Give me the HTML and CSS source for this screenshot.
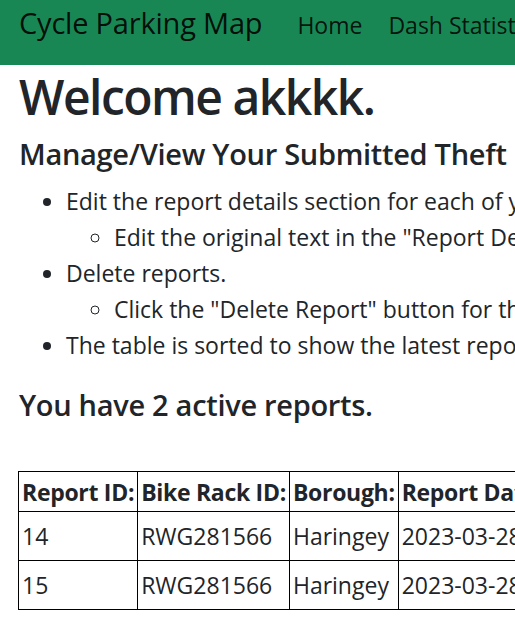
FILE: index.html
```html
<!DOCTYPE html>
<html lang="en">
<head>
<meta charset="utf-8">
<title>Cycle Parking Map</title>
<link rel="stylesheet" href="styles.css">
</head>
<body>
<nav class="navbar">
  <a class="brand" href="#">Cycle Parking Map</a>
  <ul class="nav-links">
    <li><a href="#">Home</a></li>
    <li><a href="#">Dash Statistics</a></li>
    <li><a href="#">Report Theft</a></li>
  </ul>
</nav>
<main class="content">
  <h1 class="title">Welcome akkkk.</h1>
  <h3 class="subtitle">Manage/View Your Submitted Theft Reports.</h3>
  <ul class="steps">
    <li>Edit the report details section for each of your reports.
      <ul class="sub">
        <li>Edit the original text in the "Report Details" box and click "Update Report".</li>
      </ul>
    </li>
    <li>Delete reports.
      <ul class="sub">
        <li>Click the "Delete Report" button for the report you wish to delete.</li>
      </ul>
    </li>
    <li>The table is sorted to show the latest reports first.</li>
  </ul>
  <h3 class="count">You have 2 active reports.</h3>
  <table class="reports">
    <thead>
      <tr><th>Report ID:</th><th>Bike Rack ID:</th><th>Borough:</th><th>Report Date:</th><th>Report Details:</th><th>Actions:</th></tr>
    </thead>
    <tbody>
      <tr><td>14</td><td>RWG281566</td><td>Haringey</td><td>2023-03-28</td><td>Bike stolen</td><td>Delete Report</td></tr>
      <tr><td>15</td><td>RWG281566</td><td>Haringey</td><td>2023-03-28</td><td>Bike stolen</td><td>Delete Report</td></tr>
    </tbody>
  </table>
</main>
</body>
</html>
```

FILE: styles.css
```css
html, body {
  margin: 0;
  padding: 0;
  overflow: hidden;
}
body {
  font-family: "Open Sans", "Noto Sans", sans-serif;
  font-size: 23px;
  line-height: 36px;
  color: #212529;
  background: #fff;
  width: 515px;
}
.navbar {
  background: #198754;
  height: 65px;
  display: flex;
  align-items: flex-start;
  padding: 0 0 0 19px;
  white-space: nowrap;
  box-sizing: border-box;
}
.brand {
  font-size: 29px;
  line-height: 45px;
  color: rgba(0, 0, 0, 0.9);
  text-decoration: none;
  margin-right: 35px;
  margin-top: 0;
  letter-spacing: -0.2px;
}
.nav-links {
  display: flex;
  list-style: none;
  margin: 0;
  padding: 0;
  gap: 26px;
  margin-top: 7px;
}
.nav-links a {
  color: rgba(0, 0, 0, 0.85);
  text-decoration: none;
  font-size: 23px;
  line-height: 36px;
}
.content {
  padding-left: 19px;
}
.title {
  font-size: 48px;
  font-weight: 600;
  line-height: 60px;
  letter-spacing: -1.5px;
  margin: 2px 0 0 0;
  white-space: nowrap;
}
.subtitle, .count {
  font-size: 29px;
  font-weight: 600;
  line-height: 38px;
  letter-spacing: -0.3px;
  margin: 8px 0 10px 0;
  white-space: nowrap;
}
.steps {
  margin: 0;
  padding-left: 47px;
  white-space: nowrap;
}
.steps .sub {
  list-style-type: circle;
  padding-left: 48px;
  margin: 0;
}
.count {
  margin-top: 23px;
  margin-bottom: 47px;
}
.reports {
  border-collapse: collapse;
  margin-left: -1px;
  white-space: nowrap;
}
.reports th, .reports td {
  border: 1px solid #000;
  padding: 0 3px;
  text-align: left;
}
.reports th {
  font-weight: 700;
  height: 39px;
  letter-spacing: -0.3px;
}
.reports td {
  height: 48px;
}
```
